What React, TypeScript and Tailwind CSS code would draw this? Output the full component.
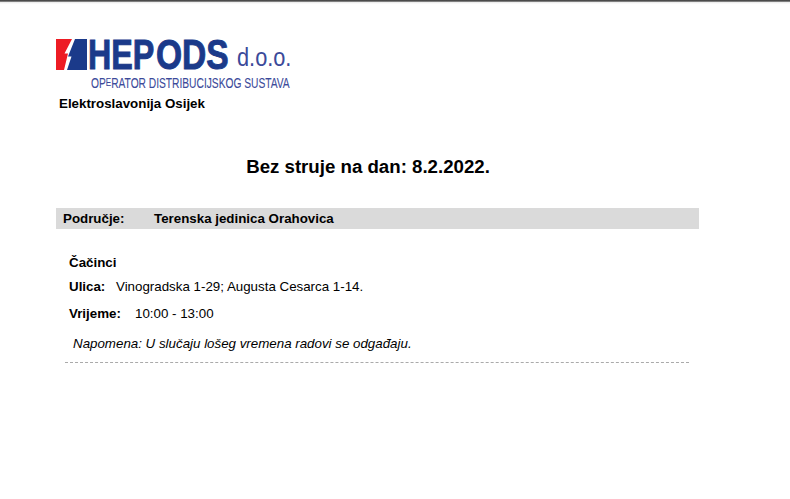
export default function App() {
  return (
    <div
      className="w-[790px] h-[499px] bg-white text-black overflow-hidden flex flex-col"
      style={{ fontFamily: '"Liberation Sans", Arial, sans-serif' }}
    >
      <div className="h-[2px] shrink-0 bg-gradient-to-b from-[#333333] to-[#9a9a9a]" />
      <div className="h-[2px] shrink-0 bg-gradient-to-b from-[#e8e8e8] to-white" />

      <div className="pl-[56px] pt-[35px]">
        <div className="flex items-start h-[31px]">
          <svg width="32" height="31" viewBox="0 0 32 31" className="shrink-0">
            <path d="M0 0H16L8.5 14.5H12L8 31H0Z" fill="#ed1c24" />
            <path d="M19 0H31V31H11L15.5 17.5H12Z" fill="#1b3a8a" />
          </svg>
          <div className="w-[68px] h-[31px] leading-[31px] text-[43px] font-bold text-[#1b3a8a] [-webkit-text-stroke:1px_#1b3a8a] origin-left scale-x-[0.75] whitespace-nowrap">
            HEP
          </div>
          <div className="w-[81px] h-[31px] leading-[31px] text-[43px] font-bold text-[#1b3a8a] [-webkit-text-stroke:1px_#1b3a8a] origin-left scale-x-[0.78] whitespace-nowrap">
            ODS
          </div>
          <div className="pt-[3px] text-[25px] leading-[31px] text-[#3b4a9a] origin-left scale-x-[0.87] whitespace-nowrap">
            d.o.o.
          </div>
        </div>
        <div className="ml-[35px] mt-[6px] h-[17px] text-[14px] leading-[14px] text-[#3b4a9a] [-webkit-text-stroke:0.1px_#3b4a9a] origin-left scale-x-[0.73] whitespace-nowrap">
          OP<span className="relative top-[-2px] text-[11px]">E</span>RATOR DISTRIBUCIJSKOG SUSTAVA
        </div>
      </div>

      <div className="pl-[59px] pt-[3px] text-[13.33px] leading-[16px] font-bold">Elektroslavonija Osijek</div>

      <div className="w-[736px] pt-[44px] text-center text-[18.67px] leading-[22px] font-bold">
        Bez struje na dan: 8.2.2022.
      </div>

      <div className="ml-[56px] mt-[30px] w-[643px] h-[21px] bg-[#dadada] flex items-center pl-[7px] pt-[1px] text-[13.33px] font-bold">
        <span className="w-[91px]">Područje:</span>
        <span>Terenska jedinica Orahovica</span>
      </div>

      <div className="ml-[69px] mt-[26px] text-[13.33px] leading-[16px]">
        <div className="font-bold">Čačinci</div>
        <div className="mt-[8px] flex">
          <span className="font-bold w-[47px]">Ulica:</span>
          <span>Vinogradska 1-29; Augusta Cesarca 1-14.</span>
        </div>
        <div className="mt-[11px] flex">
          <span className="font-bold w-[66px]">Vrijeme:</span>
          <span>10:00 - 13:00</span>
        </div>
        <div className="mt-[14px] pl-[4px] italic">Napomena: U slučaju lošeg vremena radovi se odgađaju.</div>
      </div>

      <div className="ml-[65px] mt-[10px] w-[624px] border-t border-dashed border-[#aaaaaa]" />
    </div>
  )
}
